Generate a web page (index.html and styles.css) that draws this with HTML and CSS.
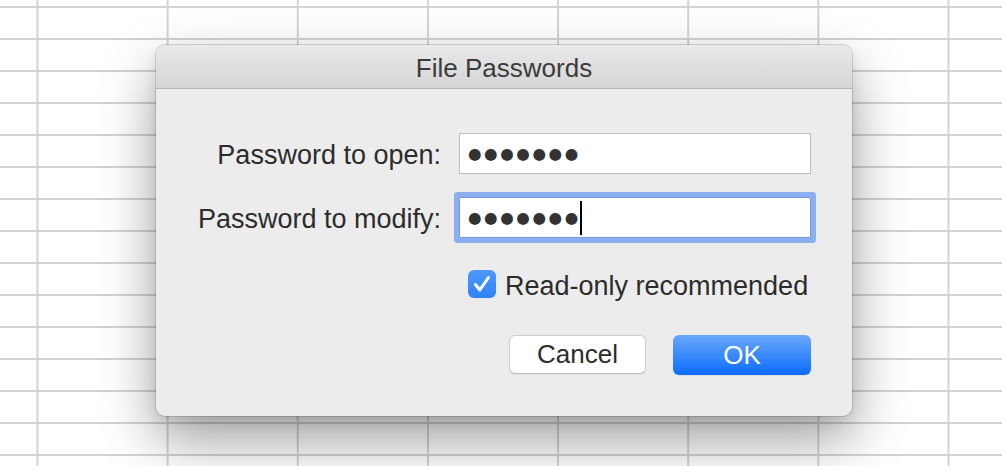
FILE: index.html
```html
<!DOCTYPE html>
<html lang="en">
<head>
    <meta charset="UTF-8">
    <meta name="viewport" content="width=device-width, initial-scale=1.0">
    <title>File Passwords</title>
    <link rel="stylesheet" href="styles.css">
</head>
<body>
    <!-- Hoja de calculo de fondo -->
    <div class="sheet">
        <!-- Dialogo -->
        <div class="dialog">
            <div class="titlebar">File Passwords</div>
            <div class="dialog-body">
                <div class="fields">
                    <label class="field-label">Password to open:</label>
                    <div class="field"><span class="dots">●●●●●●●</span></div>

                    <label class="field-label">Password to modify:</label>
                    <div class="field focused"><span class="dots">●●●●●●●</span><span class="caret"></span></div>

                    <div class="check-row">
                        <span class="check-box">
                            <svg width="28" height="28" viewBox="0 0 28 28"><path d="M7.5 14.5 L11.8 20 L20.5 7.5" fill="none" stroke="#fff" stroke-width="3" stroke-linecap="round" stroke-linejoin="round"/></svg>
                        </span>
                        <span class="check-text">Read-only recommended</span>
                    </div>
                </div>

                <div class="actions">
                    <button class="btn">Cancel</button>
                    <button class="btn primary">OK</button>
                </div>
            </div>
        </div>
    </div>
</body>
</html>
```

FILE: styles.css
```css
/* Estilo general */
body { margin: 0; font-family: "Liberation Sans", Arial, sans-serif; background-color: #fff; color: #2c2c2c; }

.sheet {
    height: 466px;
    box-sizing: border-box;
    padding: 45px 0 0 156px;
    overflow: hidden;
    background-color: #fff;
    background-image:
        linear-gradient(to right, #d3d3d3 2px, transparent 2px),
        linear-gradient(to bottom, #d3d3d3 2px, transparent 2px);
    background-size: 130.15px 100%, 100% 32px;
    background-position: 36.5px 0, 0 6px;
}

/* Ventana del dialogo */
.dialog {
    width: 696px;
    height: 371px;
    background-color: #ececec;
    border-radius: 9px;
    overflow: hidden;
    box-shadow: 0 0 0 1px rgba(0, 0, 0, 0.13), 0 24px 55px rgba(0, 0, 0, 0.38), 0 4px 14px rgba(0, 0, 0, 0.08);
}
.titlebar {
    height: 44px;
    box-sizing: border-box;
    padding-top: 3px;
    line-height: 40px;
    text-align: center;
    font-size: 26px;
    color: #3b3b3b;
    background: linear-gradient(to bottom, #e9e9e9, #d5d5d5);
    border-bottom: 1px solid #b8b8b8;
}
.dialog-body { padding: 44px 41px 0 0; }

.fields {
    display: grid;
    grid-template-columns: auto 352px;
    justify-content: end;
    column-gap: 18px;
    row-gap: 23px;
}
.field-label {
    font-size: 27px;
    align-self: center;
    padding-top: 4px;
    text-align: right;
}
.field {
    height: 41px;
    box-sizing: border-box;
    background-color: #fff;
    border: 1px solid #bebebe;
    padding-left: 8px;
    display: flex;
    align-items: center;
}
.field.focused {
    border-color: #7099e4;
    box-shadow: 0 0 0 5px #8cafef;
    border-radius: 1px;
}
.dots {
    font-family: "DejaVu Sans", sans-serif;
    font-size: 15.5px;
    letter-spacing: 2.6px;
    color: #333;
    margin-right: -2px;
}
.caret {
    width: 2px;
    height: 34px;
    background-color: #000;
    margin-left: 1px;
}

/* Casilla de verificacion */
.check-row {
    grid-column: 2;
    margin-top: 7px;
    padding-left: 9px;
    display: flex;
    align-items: flex-start;
    gap: 9px;
}
.check-box {
    width: 28px;
    height: 28px;
    margin-top: 2px;
    border-radius: 6px;
    background: linear-gradient(to bottom, #4e98fa, #2f82f7);
    display: flex;
}
.check-text { font-size: 27px; padding-top: 3px; }

/* Botones */
.actions {
    margin-top: 33px;
    display: flex;
    justify-content: flex-end;
    gap: 27px;
}
.btn {
    width: 137px;
    height: 39px;
    font-family: "Liberation Sans", Arial, sans-serif;
    font-size: 26px;
    color: #2c2c2c;
    background-color: #fff;
    border: 1px solid #cdcdcd;
    border-bottom-color: #bdbdbd;
    border-radius: 6px;
    box-shadow: 0 1px 1px rgba(0, 0, 0, 0.06);
    padding: 0;
}
.btn.primary {
    width: 138px;
    height: 40px;
    color: #fff;
    border: none;
    background: linear-gradient(to bottom, #6aa7fc, #0b6cfb);
}
```
